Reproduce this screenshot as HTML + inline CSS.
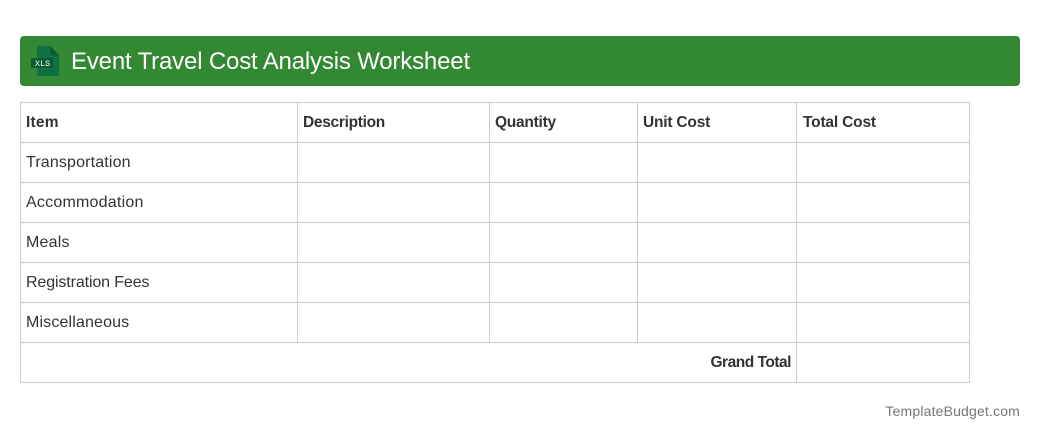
<!DOCTYPE html>
<html><head><meta charset="utf-8">
<style>
html,body{margin:0;padding:0;background:#fff;width:1040px;height:440px;overflow:hidden;font-family:"Liberation Sans",sans-serif;color:#333}
.hdr{position:absolute;left:20px;top:36px;width:1000px;height:50px;background:#338833;border-radius:4px}
.ttl{position:absolute;left:71px;top:36px;height:50px;line-height:51px;font-size:24px;letter-spacing:-.17px;color:#fff;white-space:nowrap}
table{position:absolute;left:20px;top:102px;border-collapse:collapse;table-layout:fixed;width:950px;font-size:16px}
td,th{border:1px solid #ccc;height:38px;padding:1px 5px 0;text-align:left;box-sizing:content-box;overflow:hidden;white-space:nowrap}
th{font-weight:bold;font-size:15.5px}
.r{text-align:right;font-weight:bold;font-size:15.5px;letter-spacing:-.48px}
.ft{position:absolute;right:20px;top:403px;font-size:14px;line-height:16px;letter-spacing:.17px;color:#777}
</style></head><body>
<div class="hdr"></div>
<svg style="position:absolute;left:30px;top:46px" width="30" height="30" viewBox="0 0 30 30">
<path d="M7 0H20L29 9V28Q29 30 27 30H9Q7 30 7 28Z" fill="#107040"/>
<path d="M20 0L29 9H22Q20 9 20 7Z" fill="#0b5a32"/>
<rect x="1" y="12" width="22" height="10" fill="#0a5c33"/>
<text x="12.5" y="20" font-family="Liberation Mono,monospace" font-size="8.5" fill="#fff" text-anchor="middle">XLS</text>
</svg>
<div class="ttl">Event Travel Cost Analysis Worksheet</div>
<table>
<colgroup><col style="width:277px"><col style="width:192px"><col style="width:148px"><col style="width:159px"><col style="width:173px"></colgroup>
<tr><th style="letter-spacing:.2px">Item</th><th style="letter-spacing:-.3px">Description</th><th style="letter-spacing:-.25px">Quantity</th><th style="letter-spacing:-.2px">Unit Cost</th><th style="letter-spacing:-.17px;padding-left:6px">Total Cost</th></tr>
<tr><td style="letter-spacing:.15px">Transportation</td><td></td><td></td><td></td><td></td></tr>
<tr><td style="letter-spacing:.22px">Accommodation</td><td></td><td></td><td></td><td></td></tr>
<tr><td style="letter-spacing:.2px">Meals</td><td></td><td></td><td></td><td></td></tr>
<tr><td style="letter-spacing:-.12px">Registration Fees</td><td></td><td></td><td></td><td></td></tr>
<tr><td style="letter-spacing:.15px">Miscellaneous</td><td></td><td></td><td></td><td></td></tr>
<tr><td colspan="4" class="r">Grand Total</td><td></td></tr>
</table>
<div class="ft">TemplateBudget.com</div>
</body></html>
